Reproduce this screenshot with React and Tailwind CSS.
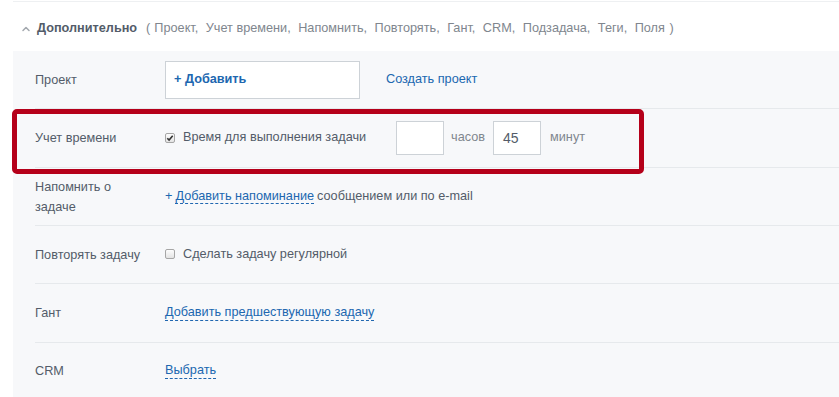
import { ChevronUp } from 'lucide-react';

const font = { fontFamily: '"Liberation Sans", Arial, sans-serif' };

function Check({ checked }) {
  return (
    <span className="w-[10px] h-[10px] border border-[#a6a6a6] rounded-[2px] bg-gradient-to-b from-[#fdfdfd] to-[#e4e4e4] flex items-center justify-center shrink-0">
      {checked && (
        <svg width="8" height="8" viewBox="0 0 8 8">
          <path d="M1.3 4.2 L3.1 6 L6.7 1.8" stroke="#333" strokeWidth="1.6" fill="none" />
        </svg>
      )}
    </span>
  );
}

function Row({ label, children, last, h = 'h-[59px]', className = '' }) {
  return (
    <div className={`flex items-center ${h} ml-[22px] ${last ? '' : 'border-b border-[#e6e9ec]'} ${className}`}>
      <div className="w-[130px] shrink-0 text-[12.7px] leading-[20px] text-[#535c69]">{label}</div>
      <div className="flex items-center text-[12.7px] text-[#535c69]">{children}</div>
    </div>
  );
}

function Dashed({ children }) {
  return (
    <span className="text-[#2067b0] border-b border-dashed border-[#2067b0] leading-[15px]">{children}</span>
  );
}

export default function App() {
  const items = ['Проект', 'Учет времени', 'Напомнить', 'Повторять', 'Гант', 'CRM', 'Подзадача', 'Теги', 'Поля'];
  return (
    <div className="w-[839px] h-[397px] bg-white overflow-hidden" style={font}>
      <div className="ml-[13px]">
        <div className="h-[2px] border-t border-[#eef0f2] mt-[1px]" />
        <div className="h-[48px] flex items-center pl-[7px] pt-[3px]">
          <ChevronUp size={12} strokeWidth={3} className="text-[#a3a8ae] mr-[5px]" />
          <span className="text-[12.7px] font-bold text-[#535c69]">Дополнительно</span>
          <span className="ml-[9px] text-[12.7px] text-[#80868e] flex">
            <span className="mr-[4px]">(</span>
            {items.map((t, i) => (
              <span key={t} className="mr-[7.5px]">{t}{i < items.length - 1 ? ',' : ''}</span>
            ))}
            <span className="-ml-[3px]">)</span>
          </span>
        </div>
        <div className="bg-[#f7f8fa] h-[346px]">
          <Row label="Проект" h="h-[58px]">
            <div className="w-[195px] h-[38px] bg-white border border-[#cdd2d7] flex items-center pl-[8px] text-[#2067b0] font-bold">
              + Добавить
            </div>
            <span className="ml-[26px] text-[#2067b0]">Создать проект</span>
          </Row>
          <div className="relative">
            <Row label="Учет времени" h="h-[60px]" className="-mt-[1px] border-t border-[#e6e9ec]">
              <Check checked />
              <span className="ml-[8px] text-[#535c69]">Время для выполнения задачи</span>
              <div className="ml-[30px] w-[48px] h-[34px] bg-white border border-[#cdd2d7]" />
              <span className="ml-[7px] text-[#80868e]">часов</span>
              <div className="ml-[8px] w-[48px] h-[34px] bg-white border border-[#cdd2d7] flex items-center pl-[9px] text-[#535c69] text-[14px]">45</div>
              <span className="ml-[9px] text-[#80868e]">минут</span>
            </Row>
            <div className="absolute left-[-1px] top-[1px] w-[632px] h-[65px] border-[5px] border-[#b5001a] rounded-[5px] pointer-events-none" />
          </div>
          <Row label={<>Напомнить о<br />задаче</>} h="h-[58px]">
            <span className="text-[#2067b0]">+ </span>
            <span className="ml-[3px]"><Dashed>Добавить напоминание</Dashed></span>
            <span className="ml-[3px]">сообщением или по e-mail</span>
          </Row>
          <Row label="Повторять задачу" h="h-[58px]">
            <Check />
            <span className="ml-[8px]">Сделать задачу регулярной</span>
          </Row>
          <Row label="Гант">
            <Dashed>Добавить предшествующую задачу</Dashed>
          </Row>
          <Row label="CRM" last h="h-[56px]">
            <Dashed>Выбрать</Dashed>
          </Row>
        </div>
      </div>
    </div>
  );
}
